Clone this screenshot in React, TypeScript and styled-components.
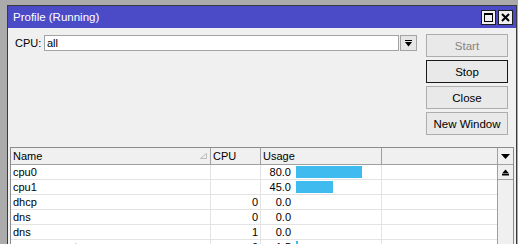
import styled, { createGlobalStyle } from 'styled-components';

const GlobalStyle = createGlobalStyle`
  html, body {
    margin: 0;
    padding: 0;
    background: #ababab;
    overflow: hidden;
  }
  body {
    font-family: "Liberation Sans", Arial, sans-serif;
    font-size: 11px;
    color: #000;
  }
`;

const Page = styled.div`
  width: 518px;
  height: 244px;
  padding: 5px 0 0 7px;
  box-sizing: border-box;
`;

const Window = styled.div`
  width: 510px;
  height: 239px;
  box-sizing: border-box;
  border: 1px solid #3a3a3a;
  border-bottom: none;
  background: #f0f0f0;
  display: flex;
  flex-direction: column;
  overflow: hidden;
`;

const TitleBar = styled.div`
  height: 22px;
  flex-shrink: 0;
  background: #4b4bc8;
  color: #fff;
  display: flex;
  align-items: center;
  justify-content: space-between;
  padding: 0 3px 0 5px;
  font-size: 11.5px;
`;

const TitleButtons = styled.div`
  display: flex;
  gap: 2px;
`;

const TitleButton = styled.div`
  width: 13px;
  height: 13px;
  border: 1px solid #1e1e1e;
  background: #f0f0f0;
  display: flex;
  align-items: center;
  justify-content: center;
`;

const Top = styled.div`
  display: flex;
  justify-content: space-between;
  padding: 6px 8px 0 7px;
  height: 119px;
  box-sizing: border-box;
  flex-shrink: 0;
`;

const CpuRow = styled.div`
  display: flex;
  align-items: center;
  height: 16px;
  margin-top: 1px;
`;

const Label = styled.span`
  width: 29px;
  line-height: 16px;
`;

const Input = styled.div`
  width: 351px;
  height: 14px;
  border: 1px solid #a3a3a3;
  background: #fff;
  padding-left: 2px;
  line-height: 14px;
`;

const DropButton = styled.div`
  width: 15px;
  height: 14px;
  margin-left: 1px;
  border: 1px solid #a3a3a3;
  background: #e6e6e6;
  display: flex;
  align-items: center;
  justify-content: center;
`;

const Buttons = styled.div`
  display: flex;
  flex-direction: column;
  gap: 3px;
`;

const Button = styled.div<{ $focused?: boolean; $disabled?: boolean }>`
  width: 80px;
  height: 21px;
  border: 1px solid ${(p) => (p.$focused ? '#1a1a1a' : '#adadad')};
  background: #e9e9e9;
  color: ${(p) => (p.$disabled ? '#838383' : '#000')};
  display: flex;
  align-items: center;
  justify-content: center;
  font-size: 11.5px;
`;

const Table = styled.div`
  margin: 0 2px 0 2px;
  flex: 1;
  border: 1px solid #8c8c8c;
  border-bottom: none;
  display: flex;
  background: #fff;
`;

const Grid = styled.div`
  flex: 1;
  display: flex;
  flex-direction: column;
`;

const columns = '200px 50px 121px 1fr';

const HeaderRow = styled.div`
  display: grid;
  grid-template-columns: ${columns};
  height: 16px;
  background: #f0f0f0;
  border-bottom: 1px solid #a0a0a0;
`;

const HeaderCell = styled.div`
  display: flex;
  align-items: center;
  justify-content: space-between;
  padding: 0 3px 0 2px;
  border-right: 1px solid #a0a0a0;
  line-height: 16px;
  &:last-child {
    border-right: none;
  }
`;

const Row = styled.div`
  display: grid;
  grid-template-columns: ${columns};
  height: 14px;
  border-bottom: 1px solid #e3e3e3;
`;

const Cell = styled.div<{ $right?: boolean }>`
  border-right: 1px solid #e3e3e3;
  padding: 0 2px;
  line-height: 14px;
  text-align: ${(p) => (p.$right ? 'right' : 'left')};
  white-space: nowrap;
  overflow: hidden;
  &:last-child {
    border-right: none;
  }
`;

const UsageCell = styled(Cell)`
  display: flex;
  align-items: center;
  padding: 0;
`;

const UsageValue = styled.span`
  width: 30px;
  text-align: right;
  margin-right: 5px;
`;

const Bar = styled.div`
  height: 12px;
  background: #3fbbef;
`;

const ScrollColumn = styled.div`
  width: 15px;
  border-left: 1px solid #a0a0a0;
  display: flex;
  flex-direction: column;
  background: #f0f0f0;
`;

const ScrollHeader = styled.div`
  height: 16px;
  border-bottom: 1px solid #a0a0a0;
  display: flex;
  align-items: center;
  justify-content: center;
`;

const ScrollUp = styled.div`
  height: 14px;
  border-bottom: 1px solid #a0a0a0;
  display: flex;
  align-items: center;
  justify-content: center;
`;

const rows = [
  { name: 'cpu0', cpu: '', usage: 80.0 },
  { name: 'cpu1', cpu: '', usage: 45.0 },
  { name: 'dhcp', cpu: '0', usage: 0.0 },
  { name: 'dns', cpu: '0', usage: 0.0 },
  { name: 'dns', cpu: '1', usage: 0.0 },
  { name: 'management', cpu: '0', usage: 1.5 },
];

const App = () => {
  return (
    <Page>
      <GlobalStyle />
      <Window>
        <TitleBar>
          <span>Profile (Running)</span>
          <TitleButtons>
            <TitleButton>
              <svg width="9" height="9" viewBox="0 0 9 9">
                <rect x="0.5" y="0.5" width="8" height="8" fill="none" stroke="#000" strokeWidth="1" />
                <rect x="0" y="0" width="9" height="2" fill="#000" />
              </svg>
            </TitleButton>
            <TitleButton>
              <svg width="9" height="9" viewBox="0 0 9 9">
                <path d="M1 1 L8 8 M8 1 L1 8" stroke="#000" strokeWidth="2" />
              </svg>
            </TitleButton>
          </TitleButtons>
        </TitleBar>
        <Top>
          <CpuRow>
            <Label>CPU:</Label>
            <Input>all</Input>
            <DropButton>
              <svg width="7" height="7" viewBox="0 0 7 7">
                <rect x="0" y="0" width="7" height="1" fill="#000" />
                <path d="M0 2 H7 L3.5 6.5 Z" fill="#000" />
              </svg>
            </DropButton>
          </CpuRow>
          <Buttons>
            <Button $disabled>Start</Button>
            <Button $focused>Stop</Button>
            <Button>Close</Button>
            <Button>New Window</Button>
          </Buttons>
        </Top>
        <Table>
          <Grid>
            <HeaderRow>
              <HeaderCell>
                <span>Name</span>
                <svg width="7" height="6" viewBox="0 0 7 6">
                  <path d="M0.5 5.5 H6.5 V0.5 Z" fill="none" stroke="#bdbdbd" strokeWidth="1" />
                </svg>
              </HeaderCell>
              <HeaderCell>CPU</HeaderCell>
              <HeaderCell>Usage</HeaderCell>
              <HeaderCell />
            </HeaderRow>
            {rows.map((r, i) => (
              <Row key={i}>
                <Cell>{r.name}</Cell>
                <Cell $right>{r.cpu}</Cell>
                <UsageCell>
                  <UsageValue>{r.usage.toFixed(1)}</UsageValue>
                  {r.usage > 0 && (
                    <Bar style={{ width: Math.max(2, Math.round(r.usage * 0.825)) }} />
                  )}
                </UsageCell>
                <Cell />
              </Row>
            ))}
          </Grid>
          <ScrollColumn>
            <ScrollHeader>
              <svg width="9" height="5" viewBox="0 0 9 5">
                <path d="M0 0 H9 L4.5 5 Z" fill="#000" />
              </svg>
            </ScrollHeader>
            <ScrollUp>
              <svg width="7" height="7" viewBox="0 0 7 7">
                <path d="M3.5 0.5 L7 4.5 H0 Z" fill="#000" />
                <rect x="0" y="5" width="7" height="1.5" fill="#000" />
              </svg>
            </ScrollUp>
          </ScrollColumn>
        </Table>
      </Window>
    </Page>
  );
};

export default App;
